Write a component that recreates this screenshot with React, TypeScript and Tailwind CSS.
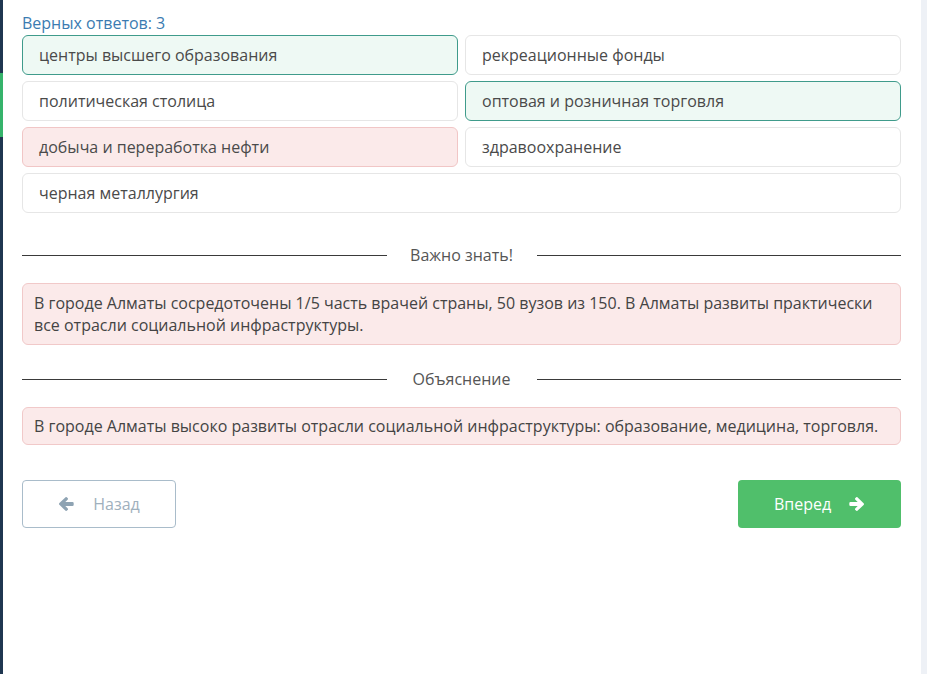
type Variant = 'correct' | 'wrong' | 'plain';

const answers: { text: string; variant: Variant; wide?: boolean }[] = [
    { text: 'центры высшего образования', variant: 'correct' },
    { text: 'рекреационные фонды', variant: 'plain' },
    { text: 'политическая столица', variant: 'plain' },
    { text: 'оптовая и розничная торговля', variant: 'correct' },
    { text: 'добыча и переработка нефти', variant: 'wrong' },
    { text: 'здравоохранение', variant: 'plain' },
    { text: 'черная металлургия', variant: 'plain', wide: true },
];

const variantClass: Record<Variant, string> = {
    correct: 'bg-[#eef9f4] border-[#3f9b8b]',
    wrong: 'bg-[#fbeaea] border-[#f1c6c6]',
    plain: 'bg-white border-[#e6e6e6]',
};

// chunky arrow, pointing right; flipped for the back button
function Arrow({ className }: { className?: string }) {
    return (
        <svg className={className} viewBox="0 0 16 14" fill="currentColor">
            <path d="M1.5 5h7.2L6.4 2.7a1.2 1.2 0 0 1 0-1.7l.6-.6a1.2 1.2 0 0 1 1.7 0l5.9 5.8a1.2 1.2 0 0 1 0 1.7L8.7 13.6a1.2 1.2 0 0 1-1.7 0l-.6-.6a1.2 1.2 0 0 1 0-1.7L8.7 9H1.5A1.2 1.2 0 0 1 .3 7.8V6.2A1.2 1.2 0 0 1 1.5 5z" />
        </svg>
    );
}

function Divider({ title }: { title: string }) {
    return (
        <div className="flex items-center h-[24px]">
            <div className="flex-1 h-px bg-[#3a3a3a]" />
            <div className="w-[150px] text-center text-[#555] text-[16px]">{title}</div>
            <div className="flex-1 h-px bg-[#3a3a3a]" />
        </div>
    );
}

export default function App() {
    return (
        <div
            className="relative w-[927px] h-[674px] bg-white overflow-hidden"
            style={{ fontFamily: '"Open Sans", "Noto Sans", sans-serif' }}
        >
            {/* left sidebar edge */}
            <div className="absolute left-0 top-0 w-[3px] h-full bg-[#1f3650]">
                <div className="mt-[73px] h-[64px] bg-[#35b36b]" />
            </div>
            {/* right scrollbar strip */}
            <div className="absolute right-0 top-0 w-[6px] h-full bg-[#eef1f6]" />

            <div className="ml-[22px] w-[879px] pt-[12px]">
                <div className="text-[#3b7bb1] text-[16px] leading-[22px] mb-[1px]">Верных ответов: 3</div>

                <div className="grid grid-cols-2 gap-x-[7px] gap-y-[6px]">
                    {answers.map(a => (
                        <div
                            key={a.text}
                            className={`h-[40px] rounded-[6px] border px-[16px] flex items-center text-[16px] text-[#4a4a4a] ${variantClass[a.variant]} ${a.wide ? 'col-span-2' : ''}`}
                        >
                            {a.text}
                        </div>
                    ))}
                </div>

                <div className="mt-[30px]">
                    <Divider title="Важно знать!" />
                </div>

                <div className="mt-[16px] rounded-[6px] border border-[#f1c9c9] bg-[#fbeaea] px-[11px] py-[8px] text-[16px] leading-[22px] text-[#444]">
                    В городе Алматы сосредоточены 1/5 часть врачей страны, 50 вузов из 150. В Алматы развиты практически все отрасли социальной инфраструктуры.
                </div>

                <div className="mt-[22px]">
                    <Divider title="Объяснение" />
                </div>

                <div className="mt-[16px] rounded-[6px] border border-[#f1c9c9] bg-[#fbeaea] px-[11px] py-[7px] text-[16px] leading-[22px] text-[#444]">
                    В городе Алматы высоко развиты отрасли социальной инфраструктуры: образование, медицина, торговля.
                </div>

                <div className="mt-[35px] flex justify-between">
                    <button className="w-[154px] h-[48px] rounded-[4px] border border-[#a9bcca] bg-white flex items-center justify-center gap-[19px] text-[16px] text-[#9fb0bd]">
                        <Arrow className="w-[16px] h-[14px] rotate-180 text-[#8ea3b3]" />
                        <span>Назад</span>
                    </button>
                    <button className="w-[163px] h-[48px] rounded-[4px] bg-[#50bf6b] flex items-center justify-center gap-[18px] text-[16px] text-white">
                        <span>Вперед</span>
                        <Arrow className="w-[16px] h-[14px]" />
                    </button>
                </div>
            </div>
        </div>
    );
}
